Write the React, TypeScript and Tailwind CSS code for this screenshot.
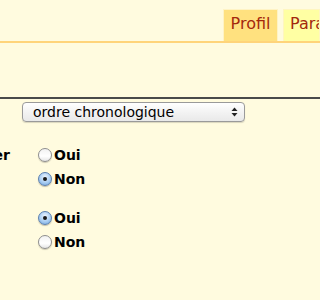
import React from "react";

const Radio: React.FC<{ checked?: boolean; label: string }> = ({ checked, label }) => (
  <label className="flex items-center h-[24px]">
    <span
      className={
        checked
          ? "flex items-center justify-center w-[14px] h-[14px] rounded-full border border-[#5a7fb0] bg-[radial-gradient(circle_at_50%_35%,#eef6ff_0%,#a9cdf2_55%,#6fa3dc_100%)] shadow-[0_1px_1px_rgba(0,0,0,0.25)]"
          : "flex items-center justify-center w-[14px] h-[14px] rounded-full border border-[#8e8e8e] bg-[linear-gradient(#f2f2f2,#ffffff_60%,#e6e6e6)] shadow-[0_1px_1px_rgba(0,0,0,0.2)]"
      }
    >
      {checked && <span className="w-[4px] h-[4px] rounded-full bg-[#1a1a1a]" />}
    </span>
    <span className="ml-[2px] font-bold text-[14px] text-black">{label}</span>
  </label>
);

export default function App() {
  return (
    <div className="w-[320px] h-[300px] overflow-hidden bg-[#fffbdf] font-['DejaVu_Sans',sans-serif]">
      {/* tabs */}
      <div className="flex justify-end items-end h-[43px] gap-[5px] border-b-2 border-[#ffd47a]">
        <div className="w-[55px] h-[32px] flex items-center justify-center pb-[3px] bg-[#ffe17f] border border-b-0 border-[#fff3c4] text-[16px] text-[#a3280d]">
          Profil
        </div>
        <div className="w-[37px] h-[32px] flex items-center pl-[6px] pb-[3px] bg-[#ffffa3] border border-b-0 border-[#fff6c0] text-[16px] text-[#a3280d] whitespace-nowrap overflow-hidden">
          Paramètres
        </div>
      </div>

      <div className="h-[56px] border-b-2 border-[#4a4a4a]" />

      {/* select */}
      <div className="pl-[22px] pt-[3px]">
        <div className="w-[223px] h-[20px] flex items-center justify-between pl-[10px] pr-[6px] rounded-[4px] border border-[#9a9a9a] bg-[linear-gradient(#ffffff,#f3f3f3_50%,#e9e9e9)] shadow-[0_1px_1px_rgba(0,0,0,0.15)] text-[14px] text-black">
          <span>ordre chronologique</span>
          <svg width="7" height="10" viewBox="0 0 7 10">
            <path d="M3.5 0.5 L6.5 4 L0.5 4 Z" fill="#222" />
            <path d="M3.5 9.5 L6.5 6 L0.5 6 Z" fill="#222" />
          </svg>
        </div>
      </div>

      {/* options */}
      <div className="flex mt-[21px]">
        <div className="w-[10px] flex justify-end">
          <span className="whitespace-nowrap font-bold text-[14px] text-black leading-[24px]">Afficher</span>
        </div>
        <div className="ml-[28px] flex flex-col">
          <Radio label="Oui" />
          <Radio label="Non" checked />
        </div>
      </div>

      <div className="flex mt-[15px]">
        <div className="ml-[38px] flex flex-col">
          <Radio label="Oui" checked />
          <Radio label="Non" />
        </div>
      </div>
    </div>
  );
}
